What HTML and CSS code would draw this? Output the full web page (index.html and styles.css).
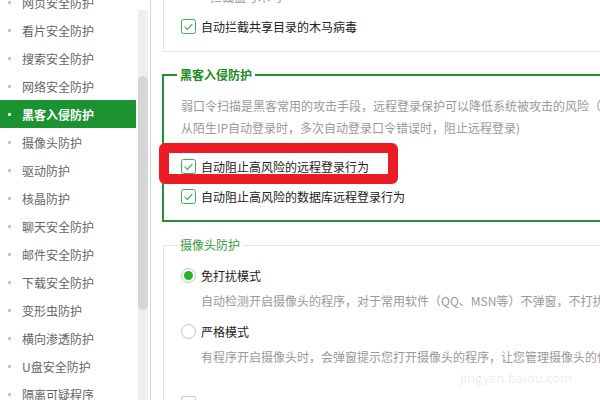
FILE: index.html
```html
<!DOCTYPE html>
<html lang="zh-CN">
<head>
    <meta charset="UTF-8">
    <title>安全防护中心</title>
    <link rel="stylesheet" href="styles.css">
</head>
<body>
<div class="app">
    <aside class="nav">
        <ul class="nav-list">
            <li class="nav-item">网页安全防护</li>
            <li class="nav-item">看片安全防护</li>
            <li class="nav-item">搜索安全防护</li>
            <li class="nav-item">网络安全防护</li>
            <li class="nav-item active">黑客入侵防护</li>
            <li class="nav-item">摄像头防护</li>
            <li class="nav-item">驱动防护</li>
            <li class="nav-item">核晶防护</li>
            <li class="nav-item">聊天安全防护</li>
            <li class="nav-item">邮件安全防护</li>
            <li class="nav-item">下载安全防护</li>
            <li class="nav-item">变形虫防护</li>
            <li class="nav-item">横向渗透防护</li>
            <li class="nav-item">U盘安全防护</li>
            <li class="nav-item">隔离可疑程序</li>
        </ul>
    </aside>

    <div class="scroll"><div class="scroll-thumb"></div></div>

    <main class="panel">
        <section class="box">
            <div class="box-note">拦截盗号木马</div>
            <label class="opt">
                <svg class="check" viewBox="0 0 15 15"><rect x="0.5" y="0.5" width="14" height="14" rx="2" fill="#fff" stroke="#35b354"/><path d="M3.6 7.6l2.7 2.7 5.1-5.5" fill="none" stroke="#35b354" stroke-width="1.2"/></svg>
                自动拦截共享目录的木马病毒
            </label>
        </section>

        <fieldset class="group group-on">
            <legend>黑客入侵防护</legend>
            <div class="group-body">
                <p class="desc">弱口令扫描是黑客常用的攻击手段，远程登录保护可以降低系统被攻击的风险（<br>从陌生IP自动登录时，多次自动登录口令错误时，阻止远程登录)</p>
                <label class="opt">
                    <svg class="check" viewBox="0 0 15 15"><rect x="0.5" y="0.5" width="14" height="14" rx="2" fill="#fff" stroke="#35b354"/><path d="M3.6 7.6l2.7 2.7 5.1-5.5" fill="none" stroke="#35b354" stroke-width="1.2"/></svg>
                    自动阻止高风险的远程登录行为
                </label>
                <label class="opt">
                    <svg class="check" viewBox="0 0 15 15"><rect x="0.5" y="0.5" width="14" height="14" rx="2" fill="#fff" stroke="#35b354"/><path d="M3.6 7.6l2.7 2.7 5.1-5.5" fill="none" stroke="#35b354" stroke-width="1.2"/></svg>
                    自动阻止高风险的数据库远程登录行为
                </label>
            </div>
        </fieldset>

        <fieldset class="group">
            <legend>摄像头防护</legend>
            <div class="group-body cam">
                <label class="opt"><span class="radio on"></span>免打扰模式</label>
                <p class="sub">自动检测开启摄像头的程序，对于常用软件（QQ、MSN等）不弹窗，不打扰</p>
                <label class="opt"><span class="radio"></span>严格模式</label>
                <p class="sub">有程序开启摄像头时，会弹窗提示您打开摄像头的程序，让您管理摄像头的使用</p>
                <label class="opt last"><span class="box-off"></span></label>
            </div>
        </fieldset>

        <div class="mark"></div>
        <div class="watermark">jingyan.baidu.com</div>
    </main>
</div>
</body>
</html>
```

FILE: styles.css
```css
body {
    margin: 0;
    font-family: "Noto Sans CJK SC", "Noto Sans", sans-serif;
    font-size: 12px;
    color: #222;
    background: #fff;
    overflow: hidden;
}

.app {
    display: flex;
    height: 400px;
    overflow: hidden;
}

/* 左侧菜单 */
.nav {
    flex: none;
    width: 136px;
    overflow: hidden;
}

.nav-list {
    list-style: none;
    margin: -12px 0 0;
    padding: 0;
}

.nav-item {
    display: flex;
    align-items: center;
    height: 28px;
    padding-left: 8px;
    color: #666;
    white-space: nowrap;
}

.nav-item::before {
    content: "";
    width: 3px;
    height: 3px;
    margin-right: 11px;
    background: #c8c8c8;
}

.nav-item.active {
    background: #1b9331;
    color: #fff;
    font-weight: bold;
}

.nav-item.active::before {
    background: #cfe6d3;
}

/* 滚动条 */
.scroll {
    flex: none;
    width: 10px;
    margin: 10px 2px 0;
    padding-top: 66px;
    background: #efefef;
    box-sizing: border-box;
}

.scroll-thumb {
    height: 234px;
    background: #d6d6d6;
    border-radius: 5px;
}

/* 右侧内容 */
.panel {
    flex: 1;
    min-width: 0;
    position: relative;
    border-left: 1px solid #d3d3d3;
    padding-left: 12px;
    overflow: hidden;
}

.box {
    margin: -15px -30px 0 0;
    border: 1px solid #e6e6e0;
    padding: 0 0 10px 17px;
}

.box-note {
    line-height: 22px;
    padding-left: 29px;
    color: #999;
}

.opt {
    display: flex;
    align-items: center;
    gap: 5px;
    height: 30px;
    white-space: nowrap;
}

.box .opt {
    margin-top: 3px;
}

.check {
    flex: none;
    width: 15px;
    height: 15px;
}

.group {
    margin: 14px -30px 0 0;
    padding: 0 0 9px 13px;
    border: 1px solid #e6e6e0;
    min-width: 0;
}

.group legend {
    padding: 0 3px;
    line-height: 18px;
    color: #3a9a3a;
}

.group-on {
    margin-left: -1px;
    border: 2px solid #1e932e;
}

.group-on legend {
    color: #218a25;
    font-weight: bold;
}

.group-body {
    padding: 11px 0 0 4px;
}

.desc {
    margin: 0 0 12px;
    line-height: 22px;
    color: #999;
    white-space: nowrap;
}

.cam {
    padding-top: 8px;
}

.cam .opt {
    height: 26px;
}

.sub {
    margin: 0 0 4px;
    padding-left: 20px;
    line-height: 26px;
    color: #999;
    white-space: nowrap;
}

.cam .last {
    margin-top: 20px;
}

.radio {
    flex: none;
    display: flex;
    align-items: center;
    justify-content: center;
    width: 15px;
    height: 15px;
    border: 1px solid #c2c2c2;
    border-radius: 50%;
    box-sizing: border-box;
}

.radio.on::after {
    content: "";
    width: 9px;
    height: 9px;
    border-radius: 50%;
    background: #22b82a;
}

.box-off {
    width: 15px;
    height: 15px;
    border: 1px solid #c8c8c8;
    border-radius: 2px;
    box-sizing: border-box;
}

/* 标注框 */
.mark {
    position: absolute;
    left: 8px;
    top: 143px;
    width: 239px;
    height: 41px;
    box-sizing: border-box;
    border: 10px solid #ec1c24;
    border-radius: 6px;
}

.watermark {
    position: absolute;
    left: 309px;
    top: 370px;
    font-size: 13px;
    line-height: 16px;
    color: rgba(0, 0, 0, 0.09);
    white-space: nowrap;
}
```
